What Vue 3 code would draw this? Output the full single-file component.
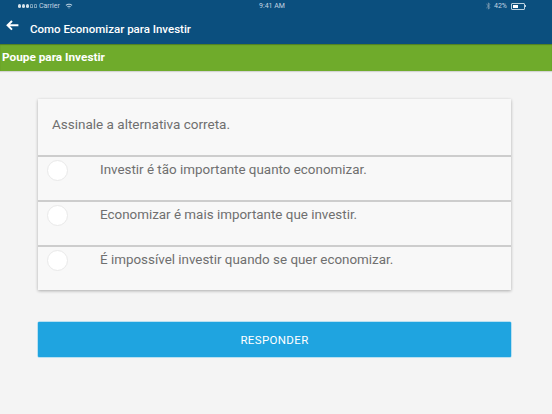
<script setup>
const options = [
  'Investir é tão importante quanto economizar.',
  'Economizar é mais importante que investir.',
  'É impossível investir quando se quer economizar.'
]
</script>

<template>
  <div class="page">
    <header class="appbar">
      <div class="status">
        <div class="status-left">
          <span class="dots"><i></i><i></i><i></i><i class="off"></i><i class="off"></i></span>
          <span>Carrier</span>
          <svg class="wifi" width="8" height="6" viewBox="0 0 9 7">
            <path d="M0.5 2.4C2.8 0.2 6.2 0.2 8.5 2.4L7.6 3.3C5.8 1.7 3.2 1.7 1.4 3.3Z M2.2 4.1C3.5 2.9 5.5 2.9 6.8 4.1L5.9 5C5.1 4.3 3.9 4.3 3.1 5Z M3.7 5.6C4.2 5.2 4.8 5.2 5.3 5.6L4.5 6.6Z" fill="#b9d0e0"/>
          </svg>
        </div>
        <span class="clock">9:41 AM</span>
        <div class="status-right">
          <svg class="bt" width="5" height="8" viewBox="0 0 5 8">
            <path d="M0.4 2L4 5.4L2.4 7.2V0.8L4 2.6L0.4 6" fill="none" stroke="#7f9db3" stroke-width="0.8"/>
          </svg>
          <span>42%</span>
          <span class="battery"><span class="level"></span></span>
          <span class="tip"></span>
        </div>
      </div>
      <div class="title-row">
        <svg class="back" width="13" height="11" viewBox="0 0 13 11">
          <path d="M6 1L1.6 5.3L6 9.6M2 5.3H12.4" fill="none" stroke="#ffffff" stroke-width="2"/>
        </svg>
        <h1>Como Economizar para Investir</h1>
      </div>
    </header>

    <div class="subbar">Poupe para Investir</div>

    <main class="content">
      <section class="card">
        <div class="question">Assinale a alternativa correta.</div>
        <div v-for="option in options" :key="option" class="option">
          <span class="radio"></span>
          <span class="label">{{ option }}</span>
        </div>
      </section>
      <button class="submit" type="button">RESPONDER</button>
    </main>
  </div>
</template>

<style scoped>
.page {
  width: 552px;
  height: 414px;
  overflow: hidden;
  display: flex;
  flex-direction: column;
  background: #f4f4f4;
  font-family: Roboto, "Liberation Sans", sans-serif;
}
.appbar {
  height: 44px;
  flex: none;
  background: #0b4f7e;
  color: #fff;
}
.status {
  height: 12px;
  display: grid;
  grid-template-columns: 241px auto 1fr;
  align-items: center;
  padding: 0 26px 0 18px;
  font-size: 7px;
  color: #c3d5e2;
}
.status-left,
.status-right {
  display: flex;
  align-items: center;
}
.status-left {
  gap: 2px;
}
.status-right {
  justify-content: flex-end;
  gap: 3px;
}
.wifi {
  margin-left: 3px;
}
.dots {
  display: flex;
  gap: 0.5px;
}
.dots i {
  width: 3.4px;
  height: 3.4px;
  border-radius: 50%;
  background: #d5e2ea;
}
.dots i.off {
  background: transparent;
  box-shadow: inset 0 0 0 0.5px #d5e2ea;
}
.battery {
  width: 14px;
  height: 7px;
  margin-left: 1px;
  padding: 1px;
  border: 1px solid #b9d0e0;
  border-radius: 1px;
  box-sizing: border-box;
  display: flex;
}
.level {
  width: 5px;
  background: #fff;
}
.tip {
  width: 1px;
  height: 2px;
  margin-left: -3px;
  background: #b9d0e0;
}
.title-row {
  height: 32px;
  display: flex;
  align-items: center;
  padding-left: 6px;
}
.back {
  margin: -5px 11px 0 0;
}
h1 {
  margin: 0 0 -2px;
  font-size: 11.5px;
  line-height: 14px;
  font-weight: 500;
}
.subbar {
  height: 27px;
  flex: none;
  box-sizing: border-box;
  padding: 0 2px 1px;
  display: flex;
  align-items: center;
  background: #6fab2b;
  color: #fff;
  font-size: 11.8px;
  font-weight: 700;
  box-shadow: inset 0 1px 1px #4f7f24, 0 1px 1px #d4d4d4;
}
.content {
  flex: 1;
  display: flex;
  flex-direction: column;
  gap: 32px;
  padding: 28px 41px 0 38px;
}
.card {
  background: #f8f8f8;
  box-shadow: 0 1px 3px rgba(0, 0, 0, 0.3);
}
.question {
  height: 56px;
  box-sizing: border-box;
  padding: 17px 0 0 14px;
  font-size: 13.5px;
  line-height: 16px;
  color: #6f6f6f;
}
.option {
  height: 45px;
  box-sizing: border-box;
  display: flex;
  align-items: flex-start;
  padding: 2.5px 0 0 9px;
  border-top: 2px solid #cdcdcd;
}
.radio {
  width: 21px;
  height: 21px;
  flex: none;
  box-sizing: border-box;
  border: 1px solid #e9e9e9;
  border-radius: 50%;
  background: #fff;
}
.label {
  margin: 2.5px 0 0 32px;
  font-size: 13.4px;
  line-height: 16px;
  color: #6f6f6f;
}
.submit {
  height: 35px;
  padding: 0;
  border: 0;
  border-radius: 1px;
  background: #1fa4e0;
  box-shadow: 0 0 0 0.5px #7fcbee;
  color: #fff;
  font-family: inherit;
  font-size: 11.5px;
  font-weight: 400;
  letter-spacing: 0.35px;
}
</style>
